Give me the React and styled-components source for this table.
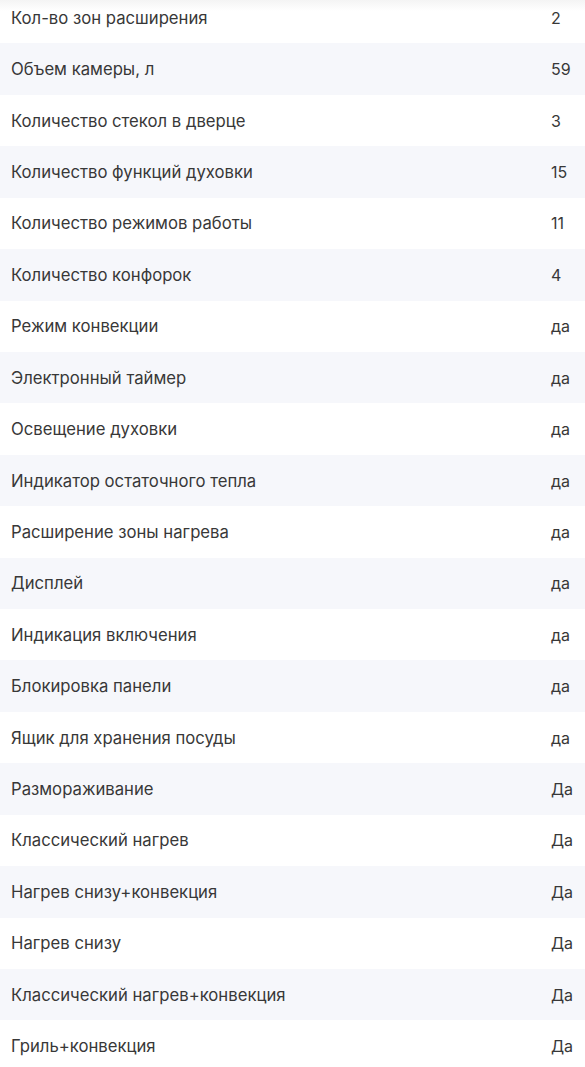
import React from 'react'
import styled, { createGlobalStyle } from 'styled-components'

const GlobalStyle = createGlobalStyle`
  html, body {
    margin: 0;
    padding: 0;
    background: #fff;
  }
  body {
    font-family: Inter, Roboto, "Noto Sans", sans-serif;
    color: #333;
    overflow: hidden;
  }
`

const Specs = styled.div`
  display: flex;
  flex-direction: column;
  margin-top: -8px;
`

const Row = styled.div`
  display: grid;
  grid-template-columns: 1fr 34px;
  align-items: center;
  height: 51.43px;
  padding-left: 11px;
  background: ${p => (p.$shaded ? '#f6f7fb' : '#fff')};
  ${p => p.$top && 'background: linear-gradient(#efefef 0, #f5f5f5 9px, #fff 19px);'}
`

const Name = styled.div`
  font-size: 16.7px;
  line-height: 20px;
  color: #383838;
  white-space: nowrap;
`

const Value = styled.div`
  font-size: 16px;
  line-height: 20px;
  color: #383838;
  white-space: nowrap;
`

const specs = [
  ['Кол-во зон расширения', '2'],
  ['Объем камеры, л', '59'],
  ['Количество стекол в дверце', '3'],
  ['Количество функций духовки', '15'],
  ['Количество режимов работы', '11'],
  ['Количество конфорок', '4'],
  ['Режим конвекции', 'да'],
  ['Электронный таймер', 'да'],
  ['Освещение духовки', 'да'],
  ['Индикатор остаточного тепла', 'да'],
  ['Расширение зоны нагрева', 'да'],
  ['Дисплей', 'да'],
  ['Индикация включения', 'да'],
  ['Блокировка панели', 'да'],
  ['Ящик для хранения посуды', 'да'],
  ['Размораживание', 'Да'],
  ['Классический нагрев', 'Да'],
  ['Нагрев снизу+конвекция', 'Да'],
  ['Нагрев снизу', 'Да'],
  ['Классический нагрев+конвекция', 'Да'],
  ['Гриль+конвекция', 'Да'],
]

export default function App() {
  return (
    <>
      <GlobalStyle />
      <Specs>
        {specs.map(([name, value], i) => (
          <Row key={name} $shaded={i % 2 === 1} $top={i === 0}>
            <Name>{name}</Name>
            <Value>{value}</Value>
          </Row>
        ))}
      </Specs>
    </>
  )
}
